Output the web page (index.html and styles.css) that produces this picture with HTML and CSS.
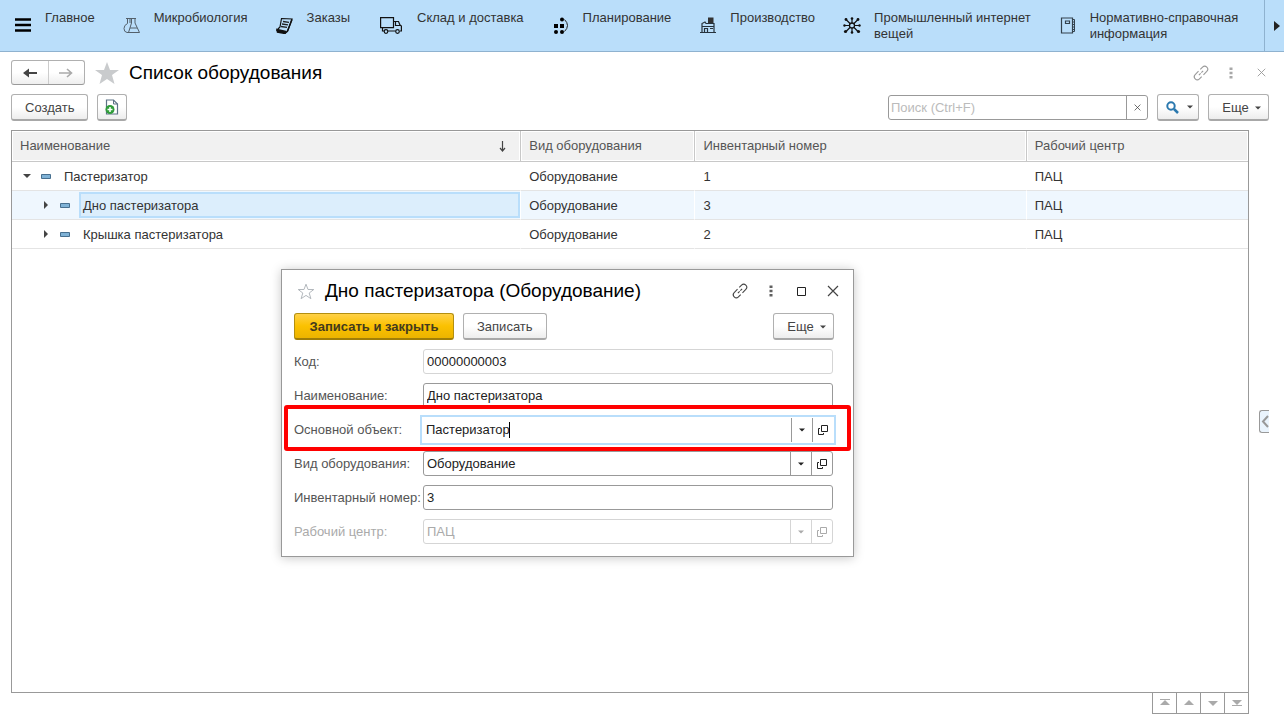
FILE: index.html
```html
<!DOCTYPE html>
<html lang="ru">
<head>
<meta charset="utf-8">
<title>Список оборудования</title>
<link rel="stylesheet" href="styles.css">
</head>
<body>
<svg class="defs" aria-hidden="true">
  <symbol id="link" viewBox="0 0 16 16"><path d="M7.500 5H2.800a3 3 0 0 0 0 6H6M8.500 11h4.700a3 3 0 0 0 0-6H10M5 8h2.500M8.500 8H11" transform="rotate(-45 8 8)" fill="none" stroke="currentColor" stroke-width="1.100"/></symbol>
  <symbol id="dots" viewBox="0 0 4 12"><path d="M.5.5h3v2.500h-3zM.5 4.800h3v2.500h-3zM.5 9h3v2.500h-3z" fill="currentColor" opacity=".85"/></symbol>
  <symbol id="cross" viewBox="0 0 12 12"><path d="M1 1l10 10M11 1L1 11" stroke="currentColor" stroke-width="1.200"/></symbol>
  <symbol id="down" viewBox="0 0 6 4"><path d="M0 .5h6L3 3.500z" fill="currentColor"/></symbol>
  <symbol id="open" viewBox="0 0 10 10"><path d="M3.500.5h6v6h-6zM2 3.500H.5v6h5V8" fill="none" stroke="currentColor"/></symbol>
  <symbol id="item" viewBox="0 0 10 5"><path d="M.5.5h9v4h-9z" fill="#7fb2d6" stroke="#476f8f"/></symbol>
</svg>

<nav class="sections">
  <button class="section"><span class="section-icon"><svg width="16" height="14" viewBox="0 0 16 14"><path d="M0 1.500h16M0 7h16M0 12.500h16" stroke="#000" stroke-width="2.500"/></svg></span><span>Главное</span></button>
  <button class="section"><span class="section-icon"><svg width="18" height="17" viewBox="0 0 18 17" fill="none" stroke="#53606b"><path d="M3 1.500h5M4.500 2v4.500Q1 8 1 11.500T4 15.500h3M7 2v4M8 1.500h5M8.500 2v4L5.500 15.500h11L12 6V2M7 11h7"/></svg></span><span>Микробиология</span></button>
  <button class="section"><span class="section-icon"><svg width="17" height="17" viewBox="0 0 17 17"><path d="M5.500 1.500l10.500.5-4.500 12.500-2 1.500L1 13.500l1.500-2L4 10z" fill="none" stroke="#111" stroke-width="1.200"/><path d="M1 12.500l9 2-1 2-7.500-1.500zM11.500 14L16 2.500" fill="#111" stroke="#111" stroke-width="1.500"/><path d="M7 4.500l6 .8M6 7l6 .8M5 9.500l6 .8" stroke="#222" stroke-width="1.300"/></svg></span><span>Заказы</span></button>
  <button class="section"><span class="section-icon section-icon-wide"><svg width="22" height="17" viewBox="0 0 22 17" fill="none" stroke="#111" stroke-width="1.200"><path d="M4 14H2.500v-3M.6.6h12.900v10H.6zM13.500 4.500h5l1.500 3.500 1.400 1v5H20M8 14h7.500M15.500 5v3.500h5"/><circle cx="6" cy="14.500" r="1.800"/><circle cx="17.500" cy="14.500" r="1.800"/></svg></span><span>Склад и доставка</span></button>
  <button class="section"><span class="section-icon"><svg width="16" height="17" viewBox="0 0 16 17"><path d="M1 7h4v4H1zM7 7h4v4H7z"/><circle cx="9" cy="2.500" r="2"/><circle cx="3" cy="15" r="2"/><circle cx="9" cy="15" r="2"/><path d="M11.500 2.500q6 6 0 12" fill="none" stroke="#222"/></svg></span><span>Планирование</span></button>
  <button class="section"><span class="section-icon"><svg width="16" height="17" viewBox="0 0 16 17"><path d="M8 .5h5.500V6H8z" fill="#333"/><path d="M2 16V6.500L5 5l1 1.500h8V16M0 15.500h16M2 9.500h12M4.500 15.500v-4h3v4M10 11.500h3" fill="none" stroke="#26323c" stroke-width="1.200"/></svg></span><span>Производство</span></button>
  <button class="section"><span class="section-icon"><svg width="18" height="17" viewBox="0 0 18 17"><path d="M9 8.500V1.500M9 8.500V16M9 8.500H1.500M9 8.500h7.500M9 8.500L3 2.500M9 8.500l6-6M9 8.500l-6 6M9 8.500l6 6" stroke="#111" stroke-width="1.200"/><circle cx="9" cy="8.500" r="2.500" fill="#badefa" stroke="#111" stroke-width="1.300"/><g fill="#111"><circle cx="9" cy="1.500" r="1.300"/><circle cx="9" cy="15.500" r="1.300"/><circle cx="1.500" cy="8.500" r="1.200"/><circle cx="16.500" cy="8.500" r="1.200"/><circle cx="3" cy="2.500" r="1.400"/><circle cx="15" cy="2.500" r="1.400"/><circle cx="2.500" cy="14.500" r="1.600"/><circle cx="15.500" cy="14.500" r="1.600"/></g></svg></span><span>Промышленный интернет<br>вещей</span></button>
  <button class="section"><span class="section-icon"><svg width="16" height="17" viewBox="0 0 16 17" fill="none" stroke="#33414c"><path d="M1.500 1h11v15h-11zM5.500 4h4v2.500h-4z" stroke-width="1.200"/><path d="M13 2.500h1.500v12H13M13 5h2M13 7.500h2M13 10h2M13 12.500h2"/></svg></span><span>Нормативно-справочная<br>информация</span></button>
  <button class="sections-next" aria-label="Далее"><svg width="6" height="10" viewBox="0 0 6 10"><path d="M0 0l6 5-6 5z" fill="#222"/></svg></button>
</nav>

<main class="page">
  <header class="title-row">
    <div class="history">
      <button aria-label="Назад"><svg width="14" height="10" viewBox="0 0 14 10"><path d="M14 5H4" stroke="#444" stroke-width="2"/><path d="M6 .5V9.500L0 5z" fill="#444"/></svg></button>
      <button aria-label="Вперед"><svg width="14" height="10" viewBox="0 0 14 10"><path d="M0 5h12M8 1l4.500 4L8 9" fill="none" stroke="#aaa" stroke-width="1.600"/></svg></button>
    </div>
    <svg class="star" width="24" height="22" viewBox="0 0 24 22"><path d="M12 0l3 8h9l-7 5 2.500 9L12 17l-7.500 5L7 13 0 8h9z" fill="#c9cbcd"/></svg>
    <h1>Список оборудования</h1>
    <div class="page-tools">
      <button aria-label="Ссылка"><svg width="16" height="16"><use href="#link"/></svg></button>
      <button aria-label="Меню"><svg width="4" height="12"><use href="#dots"/></svg></button>
      <button aria-label="Закрыть"><svg width="9" height="9"><use href="#cross"/></svg></button>
    </div>
  </header>

  <div class="toolbar">
    <button class="btn">Создать</button>
    <button class="btn btn-icon" aria-label="Создать копированием"><svg width="14" height="16" viewBox="0 0 14 16"><path d="M1.500 1h7l4 4v10h-11z" fill="#fff" stroke="#5d7286" stroke-width="1.200"/><path d="M8.500 1v4h4" fill="none" stroke="#5d7286"/><circle cx="5" cy="10.500" r="4.500" fill="#2f9c3a"/><path d="M5 8v5M2.500 10.500h5" stroke="#fff" stroke-width="1.500"/></svg></button>
    <div class="search">
      <input type="text" placeholder="Поиск (Ctrl+F)" aria-label="Поиск">
      <button aria-label="Очистить"><svg width="7" height="7"><use href="#cross"/></svg></button>
    </div>
    <button class="btn btn-find" aria-label="Найти"><svg width="13" height="13" viewBox="0 0 13 13"><circle cx="5" cy="5" r="3.700" fill="none" stroke="#2a78ae" stroke-width="2"/><path d="M8 8l4 4" stroke="#2a78ae" stroke-width="2.500"/></svg><svg class="caret" width="6" height="4"><use href="#down"/></svg></button>
    <button class="btn btn-more">Еще<svg class="caret" width="6" height="4"><use href="#down"/></svg></button>
  </div>

  <section class="list">
    <table>
      <colgroup><col class="col-name"><col class="col-kind"><col class="col-number"><col></colgroup>
      <thead>
        <tr><th><div class="sorted">Наименование<svg width="7" height="11" viewBox="0 0 7 11"><path d="M3.500 0v9M1 7l2.500 3L6 7" fill="none" stroke="#444" stroke-width="1.200"/></svg></div></th><th>Вид оборудования</th><th>Инвентарный номер</th><th>Рабочий центр</th></tr>
      </thead>
      <tbody>
        <tr><td><div class="node"><svg width="10" height="10" viewBox="0 0 10 10"><path d="M1 3h8L5 7z" fill="#444"/></svg><svg width="10" height="5"><use href="#item"/></svg><span>Пастеризатор</span></div></td><td>Оборудование</td><td>1</td><td>ПАЦ</td></tr>
        <tr class="current"><td><div class="node child"><svg width="10" height="10" viewBox="0 0 10 10"><path d="M3 1l4 4-4 4z" fill="#444"/></svg><svg width="10" height="5"><use href="#item"/></svg><span>Дно пастеризатора</span></div></td><td>Оборудование</td><td>3</td><td>ПАЦ</td></tr>
        <tr><td><div class="node child"><svg width="10" height="10" viewBox="0 0 10 10"><path d="M3 1l4 4-4 4z" fill="#444"/></svg><svg width="10" height="5"><use href="#item"/></svg><span>Крышка пастеризатора</span></div></td><td>Оборудование</td><td>2</td><td>ПАЦ</td></tr>
      </tbody>
    </table>
  </section>
  <div class="pager">
    <button aria-label="В начало"><svg width="10" height="8" viewBox="0 0 10 8"><path d="M0 .5h10" stroke="#aaa"/><path d="M5 1l5 5H0z" fill="#aaa"/></svg></button>
    <button aria-label="Вверх"><svg width="10" height="8" viewBox="0 0 10 8"><path d="M5 1l5 5H0z" fill="#aaa"/></svg></button>
    <button aria-label="Вниз"><svg width="10" height="8" viewBox="0 0 10 8"><path d="M0 2h10L5 7z" fill="#aaa"/></svg></button>
    <button aria-label="В конец"><svg width="10" height="8" viewBox="0 0 10 8"><path d="M0 1h10L5 6z" fill="#aaa"/><path d="M0 6.500h10" stroke="#aaa"/></svg></button>
  </div>
  <button class="side-tab" aria-label="Развернуть"><svg width="8" height="13" viewBox="0 0 8 13"><path d="M7 1L2 6.500 7 12" fill="none" stroke="#999" stroke-width="2"/></svg></button>
</main>

<section class="dialog" role="dialog" aria-labelledby="dialog-title">
  <header class="dialog-title">
    <svg width="18" height="17" viewBox="0 0 18 17"><path d="M9 1.200l2 5.300h5.800l-4.600 3.500 1.700 5.700L9 12.400l-4.900 3.300L5.800 10 1.200 6.500H7z" fill="none" stroke="#b3b8bd"/></svg>
    <h2 id="dialog-title">Дно пастеризатора (Оборудование)</h2>
    <div class="dialog-tools">
      <button aria-label="Ссылка"><svg width="16" height="16"><use href="#link"/></svg></button>
      <button aria-label="Меню"><svg width="4" height="12"><use href="#dots"/></svg></button>
      <button aria-label="Развернуть"><svg width="9" height="9" viewBox="0 0 9 9"><path d="M.5.5h8v8h-8z" fill="none" stroke="#222"/></svg></button>
      <button aria-label="Закрыть"><svg width="12" height="12"><use href="#cross"/></svg></button>
    </div>
  </header>
  <div class="dialog-bar">
    <button class="btn btn-main">Записать и закрыть</button>
    <button class="btn">Записать</button>
    <button class="btn btn-more">Еще<svg class="caret" width="6" height="4"><use href="#down"/></svg></button>
  </div>
  <form class="form">
    <div class="row"><label for="code">Код:</label><div class="field quiet"><input id="code" type="text" value="00000000003" readonly></div></div>
    <div class="row"><label for="name">Наименование:</label><div class="field"><input id="name" type="text" value="Дно пастеризатора"></div></div>
    <div class="row marked"><label for="parent">Основной объект:</label><div class="field focused"><input id="parent" type="text" value="Пастеризатор"><i class="cursor"></i><button type="button" aria-label="Выбрать"><svg width="6" height="4"><use href="#down"/></svg></button><button type="button" aria-label="Открыть"><svg width="10" height="10"><use href="#open"/></svg></button></div></div>
    <div class="row"><label for="kind">Вид оборудования:</label><div class="field"><input id="kind" type="text" value="Оборудование"><button type="button" aria-label="Выбрать"><svg width="6" height="4"><use href="#down"/></svg></button><button type="button" aria-label="Открыть"><svg width="10" height="10"><use href="#open"/></svg></button></div></div>
    <div class="row"><label for="number">Инвентарный номер:</label><div class="field"><input id="number" type="text" value="3"></div></div>
    <div class="row disabled"><label for="center">Рабочий центр:</label><div class="field quiet"><input id="center" type="text" value="ПАЦ" disabled><button type="button" disabled aria-label="Выбрать"><svg width="6" height="4"><use href="#down"/></svg></button><button type="button" disabled aria-label="Открыть"><svg width="10" height="10"><use href="#open"/></svg></button></div></div>
  </form>
</section>
</body>
</html>
```

FILE: styles.css
```css
* { box-sizing: border-box; }
html, body { height: 100%; }
body {
  margin: 0;
  display: flex;
  flex-direction: column;
  position: relative;
  background: #fff;
  color: #333;
  font: 13px/16px "Liberation Sans", Arial, sans-serif;
}
button, input { font: inherit; color: inherit; margin: 0; padding: 0; }
button { border: 0; background: none; display: flex; align-items: center; justify-content: center; }
svg { flex: none; }
h1, h2 { margin: 0; font-size: 19px; line-height: 24px; font-weight: 400; color: #000; white-space: nowrap; }
.defs { display: none; }

.sections { display: flex; flex: none; height: 52px; padding-left: 1px; background: #badefa; border-bottom: 1px solid #8fb2cf; }
.section { align-items: flex-start; justify-content: flex-start; padding: 10px 15px 0 0; text-align: left; white-space: nowrap; }
.section-icon { display: flex; width: 44px; height: 30px; align-items: center; justify-content: center; }
.section-icon-wide { width: 52px; }
.sections-next { flex: none; width: 20px; height: 51px; margin-left: auto; padding-left: 4px; border-left: 1px solid #8fb2cf; }

.page { flex: 1; display: flex; flex-direction: column; position: relative; padding: 8px 15px 8px 11px; }
.title-row { display: flex; align-items: center; height: 25px; }
.history { display: flex; width: 74px; height: 25px; border: 1px solid #b0b0b0; border-bottom-color: #999; border-radius: 3px; background: linear-gradient(#fff 50%, #eee); }
.history button { flex: 1; }
.history button + button { border-left: 1px solid #ccc; }
.star { margin: 0 10px; }
.page-tools { display: flex; align-items: center; margin: 0 -7px 0 auto; color: #999; }
.page-tools button { width: 30px; }

.toolbar { display: flex; align-items: center; height: 27px; margin-top: 9px; }
.btn { height: 27px; padding: 1px 13px 0; border: 1px solid #b0b0b0; border-bottom: 2px solid #a8a8a8; border-radius: 3px; background: linear-gradient(#fff 50%, #ededed); color: #444; white-space: nowrap; }
.btn-icon { width: 30px; padding: 0; margin-left: 9px; }
.search { display: flex; width: 260px; height: 25px; margin: 0 9px 0 auto; border: 1px solid #999; border-radius: 3px; }
.search input { flex: 1; min-width: 0; padding-left: 2px; border: 0; background: none; outline: 0; }
.search input::placeholder { color: #bbb; }
.search button { width: 21px; border-left: 1px solid #999; }
.btn-find { width: 42px; padding: 0 0 0 3px; gap: 8px; margin-right: 9px; }
.btn-more { width: 61px; padding: 1px 0 0 6px; gap: 6px; }

.list { flex: 1; margin: 9px 20px 0 0; border: 1px solid #999; }
table { width: 100%; border-collapse: separate; border-spacing: 0; table-layout: fixed; }
.col-name { width: 41.2%; }
.col-kind { width: 14.1%; }
.col-number { width: 26.8%; }
th { height: 31px; padding: 0 8px; border-bottom: 1px solid #c8c8c8; border-right: 1px solid #c8c8c8; background: #f1f1f1; color: #555; font-weight: 400; text-align: left; box-shadow: inset 0 0 0 1px #fff; }
th:last-child, td:last-child { border-right: 0; }
.sorted { display: flex; justify-content: space-between; align-items: center; padding-right: 6px; }
td { height: 29px; padding: 1px 8px 0; border-bottom: 1px solid #e4e4e4; border-right: 1px solid #fff; }
td:first-child { padding: 0; }
.node { display: flex; align-items: center; height: 28px; padding-left: 10px; }
.node svg + svg { margin: 0 9px; }
.node span { flex: 1; height: 26px; padding-left: 4px; line-height: 27px; }
.child { padding-left: 29px; }
.current td { background: #eff7fe; }
.current .node span { padding-left: 2px; line-height: 23px; background: #dceefc; border: 2px solid #b9defb; }

.pager { display: flex; align-self: flex-end; margin: -1px 20px 0 0; border: 1px solid #999; }
.pager button { width: 24px; height: 20px; border-left: 1px solid #999; }
.pager button:first-child { width: 23px; border-left: 0; }
.side-tab { position: absolute; right: 15px; top: 358px; width: 10px; height: 23px; border: 1px solid #999; border-right: 0; border-radius: 3px 0 0 3px; background: #eaf4fd; }

.dialog { position: absolute; left: 281px; top: 269px; width: 573px; padding: 8px 20px 12px 12px; border: 1px solid #999; background: #fff; box-shadow: 0 1px 10px rgba(0, 0, 0, .22); }
.dialog-title { display: flex; align-items: center; height: 26px; padding-left: 3px; }
.dialog-title h2 { margin-left: 10px; }
.dialog-tools { display: flex; align-items: center; margin: 0 -15px 0 auto; color: #444; }
.dialog-tools button { width: 31px; }
.dialog-bar { display: flex; gap: 9px; margin-top: 9px; }
.dialog-bar .btn-more { margin-left: auto; margin-right: -1px; }
.btn-main { min-width: 160px; border-color: #b38f10; border-bottom-color: #a07e08; background: linear-gradient(#ffd147, #fbc100 50%, #ecb400); font-weight: 700; color: #433a1e; }
.form { display: flex; flex-direction: column; gap: 9px; margin-top: 9px; }
.row { display: flex; align-items: center; height: 25px; position: relative; color: #555; }
.row label { flex: none; width: 129px; white-space: nowrap; }
.field { flex: 1; display: flex; position: relative; height: 25px; border: 1px solid #999; border-radius: 3px; color: #222; }
.field input { flex: 1; min-width: 0; padding-left: 3px; border: 0; background: none; outline: 0; }
.field button { width: 21px; border-left: 1px solid #999; }
.quiet, .quiet button { border-color: #d5d5d5; }
.disabled, .disabled .field { color: #aaa; }
.focused { height: 30px; margin: 0 -3px; padding: 1px; border: 2px solid #b9defb; border-radius: 0; }
.cursor { position: absolute; left: 87px; top: 5px; width: 1px; height: 16px; background: #000; }
.marked::after { content: ""; position: absolute; inset: -12px -18px -9px -10px; border: 4px solid #f00; border-radius: 3px; pointer-events: none; }
```
